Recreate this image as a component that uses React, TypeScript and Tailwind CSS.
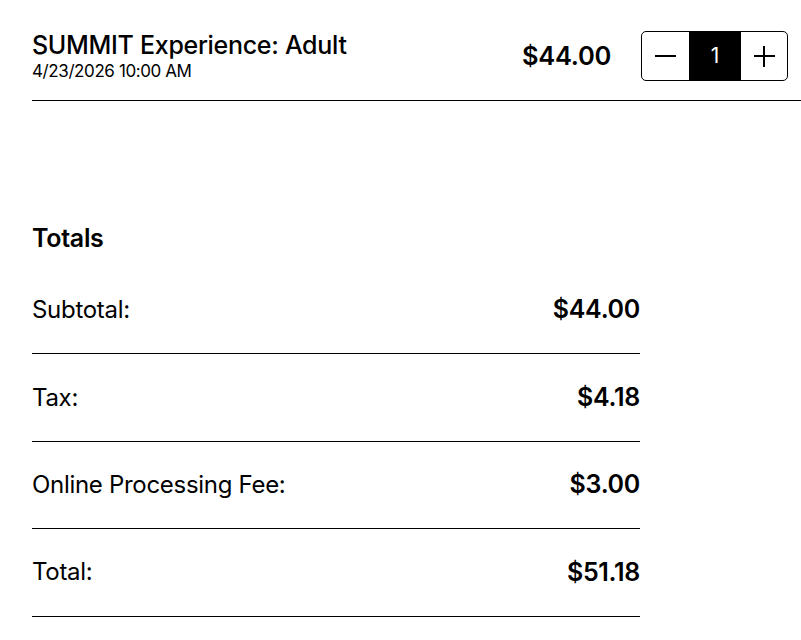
import * as React from "react";

const rows = [
  { label: "Subtotal:", value: "$44.00" },
  { label: "Tax:", value: "$4.18" },
  { label: "Online Processing Fee:", value: "$3.00" },
  { label: "Total:", value: "$51.18" },
];

export default function App() {
  const [qty, setQty] = React.useState(1);

  return (
    <div className="min-h-[640px] bg-white pl-8 text-black font-['Inter',sans-serif]">
      {/* ticket line */}
      <div className="flex items-center justify-between border-b border-black pt-[31px] pb-[19px] pr-[13px]">
        <div className="flex flex-col">
          <div className="text-[25px] font-medium leading-[28px] tracking-[-0.3px]">
            SUMMIT Experience: Adult
          </div>
          <div className="mt-[3px] text-[17px] leading-[19px] tracking-[-0.4px]">
            4/23/2026 10:00 AM
          </div>
        </div>
        <div className="flex items-center gap-[30px]">
          <div className="text-[25.5px] font-semibold tracking-[-0.3px]">$44.00</div>
          <div className="flex h-[50px] overflow-hidden rounded-[5px] border border-black">
            <button
              className="flex w-[47px] items-center justify-center"
              onClick={() => setQty(Math.max(0, qty - 1))}
            >
              <span className="block h-[2px] w-[21px] bg-black" />
            </button>
            <div className="flex w-[52px] items-center justify-center bg-black text-[21px] text-white">
              {qty}
            </div>
            <button
              className="relative flex w-[46px] items-center justify-center"
              onClick={() => setQty(qty + 1)}
            >
              <span className="block h-[2px] w-[21px] bg-black" />
              <span className="absolute block h-[21px] w-[2px] bg-black" />
            </button>
          </div>
        </div>
      </div>

      {/* totals */}
      <div className="mt-[122px] w-[608px]">
        <div className="text-[25px] font-semibold leading-[30px] tracking-[-0.3px]">Totals</div>
        <div className="mt-[14px]">
          {rows.map((r) => (
            <div
              key={r.label}
              className="flex h-[87.4px] items-center justify-between border-b border-black"
            >
              <span className="text-[24px] tracking-[-0.3px]">{r.label}</span>
              <span className="text-[25px] font-semibold tracking-[-0.3px]">{r.value}</span>
            </div>
          ))}
        </div>
      </div>
    </div>
  );
}
